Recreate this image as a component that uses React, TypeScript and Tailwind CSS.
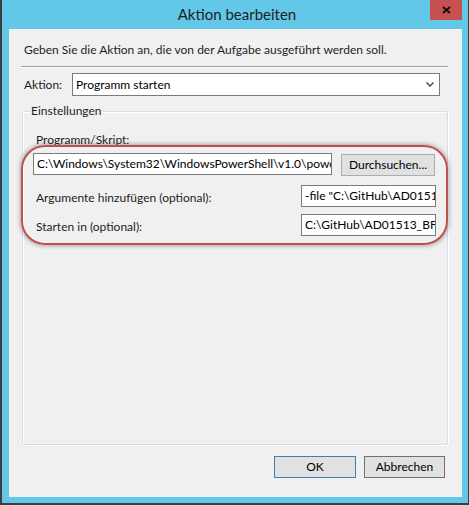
import React from 'react';

const font = { fontFamily: '"Segoe UI", Lato, "Noto Sans", sans-serif' };

function TextBox({ value, className }: { value: string; className: string }) {
  return (
    <div
      className={`h-[22px] border border-[#7a7a7a] bg-white pl-[3px] pr-[1px] text-[12px] leading-[20px] text-black overflow-hidden whitespace-nowrap ${className}`}
    >
      {value}
    </div>
  );
}

function Button({ label, isDefault, className }: { label: string; isDefault?: boolean; className: string }) {
  return (
    <button
      className={`h-[22px] bg-[#e1e1e1] text-[12px] leading-[20px] text-black text-center border ${
        isDefault ? 'border-[#3c7fb1]' : 'border-[#707070]'
      } ${className}`}
    >
      {label}
    </button>
  );
}

export default function App() {
  return (
    <div
      className="relative w-[469px] h-[505px] bg-[#3d3d3d] pl-[2px] pr-[1px] pb-[2px] text-[#1e1e1e]"
      style={font}
    >
      <div className="flex flex-col h-full bg-[#63c8e8]">
        {/* title bar */}
        <div className="relative h-[29px] shrink-0">
          <div className="text-center text-[15px] leading-[29px] text-[#1e1e1e] pl-[4px]">Aktion bearbeiten</div>
          <div className="absolute right-[6px] top-0 w-[32px] h-[20px] bg-[#c75050] flex items-center justify-center">
            <svg width="9" height="8" viewBox="0 0 9 8">
              <path d="M1 1 L8 7 M8 1 L1 7" stroke="#111" strokeWidth="2" />
            </svg>
          </div>
        </div>

        {/* client area */}
        <div className="flex flex-col flex-1 bg-[#f0f0f0] ml-[7px] mr-[6px] mb-[6px] text-[12px]">
          <div className="mt-[13px] ml-[15px] leading-[16px]">
            Geben Sie die Aktion an, die von der Aufgabe ausgeführt werden soll.
          </div>
          <div className="mt-[8px] ml-[12px] w-[427px] border-t border-[#a0a0a0] border-b border-b-white" />

          <div className="mt-[5px] flex items-center h-[23px]">
            <div className="ml-[15px] w-[48px] leading-[16px]">Aktion:</div>
            <div className="relative w-[368px] h-[23px] border border-[#7a7a7a] bg-white pl-[3px] leading-[21px] text-black">
              Programm starten
              <svg className="absolute right-[5px] top-[8px]" width="8" height="5" viewBox="0 0 8 5">
                <path d="M0.5 0.5 L4 4 L7.5 0.5" stroke="#444" strokeWidth="1.4" fill="none" />
              </svg>
            </div>
          </div>

          {/* group box */}
          <div className="relative mt-[15px] ml-[13px] w-[426px] h-[334px] border border-[#d5dfe5] rounded-[2px] shadow-[inset_1px_1px_0_#fff,1px_1px_0_#fff]">
            <div className="absolute left-[7px] top-[-9px] px-[1px] bg-[#f0f0f0] leading-[16px]">Einstellungen</div>

            <div className="mt-[20px] ml-[13px] leading-[16px]">Programm/Skript:</div>
            <div className="mt-[5px] flex">
              <TextBox
                className="ml-[10px] w-[299px]"
                value={'C:\\Windows\\System32\\WindowsPowerShell\\v1.0\\powershell.exe'}
              />
              <Button className="ml-[9px] mt-[1px] w-[94px] border-[#adadad]" label="Durchsuchen..." />
            </div>

            <div className="mt-[9px] flex items-center">
              <div className="ml-[13px] w-[265px] leading-[16px] mt-[3px]">Argumente hinzufügen (optional):</div>
              <TextBox className="w-[135px]" value={'-file "C:\\GitHub\\AD01513_BFV\\script.ps1"'} />
            </div>
            <div className="mt-[7px] flex items-center">
              <div className="ml-[13px] w-[265px] leading-[16px] mt-[3px]">Starten in (optional):</div>
              <TextBox className="w-[135px]" value={'C:\\GitHub\\AD01513_BFV\\'} />
            </div>
          </div>

          <div className="mt-[11px] flex justify-end pr-[17px] gap-[8px]">
            <Button className="w-[82px]" label="OK" isDefault />
            <Button className="w-[81px]" label="Abbrechen" />
          </div>
        </div>
      </div>

      {/* red highlight annotation */}
      <div className="absolute left-[21px] top-[145px] w-[427px] h-[100px] rounded-[24px] border-2 border-[#c0504d] shadow-[0_0_4px_1px_rgba(0,0,0,0.3)] pointer-events-none" />
    </div>
  );
}
